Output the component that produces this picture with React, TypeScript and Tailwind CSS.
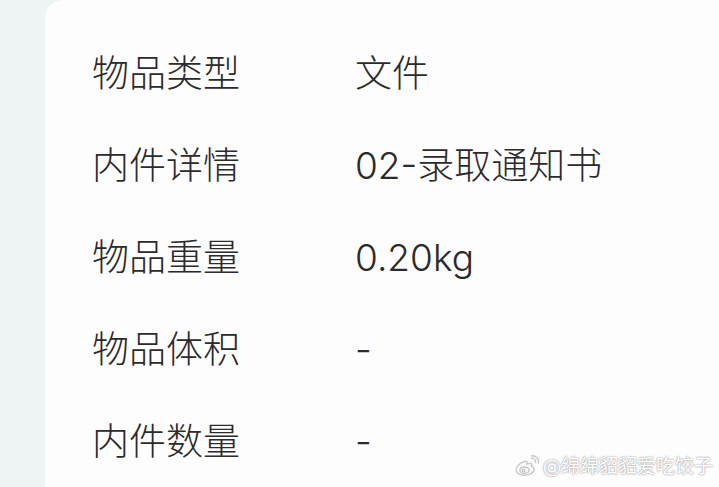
const rows = [
  { label: "物品类型", value: "文件" },
  { label: "内件详情", value: "02-录取通知书" },
  { label: "物品重量", value: "0.20kg" },
  { label: "物品体积", value: "-" },
  { label: "内件数量", value: "-" },
];

const WeiboLogo = () => (
  <svg width="26" height="22" viewBox="0 0 26 22" fill="none">
    <g stroke="#c8c8c8" strokeWidth="1.4" fill="#fafafa">
      <path d="M10.5 6.5c-4.5 1.2-9 5-8.5 8.6.5 3.5 5 5.5 10 5 5-.5 8.6-3.4 8.2-6.3-.3-1.9-2.3-2.3-2.8-2.5.6-1.3.4-2.5-.7-2.8-1.2-.4-3 .3-3.6.6.4-1.4 0-3.5-2.6-2.6z" />
      <ellipse cx="10.5" cy="15.2" rx="4.6" ry="3.2" />
      <circle cx="9.6" cy="15.6" r="1.3" />
    </g>
    <path d="M17 3.2c2.8-.4 5 1.8 4.6 4.5" stroke="#c8c8c8" strokeWidth="1.4" strokeLinecap="round" />
    <path d="M17.5 0.8c4.4-.5 7.7 3 7 7.3" stroke="#c8c8c8" strokeWidth="1.4" strokeLinecap="round" />
  </svg>
);

const App = () => {
  return (
    <div
      className="w-[719px] h-[487px] bg-[#eef3f3] flex overflow-hidden relative"
      style={{ fontFamily: 'Inter, "Noto Sans CJK SC", sans-serif' }}
    >
      <div className="ml-[45px] flex-1 bg-[#fdfdfd] rounded-tl-[18px] pl-[47px] pt-[27px] flex flex-col">
        {rows.map((row) => (
          <div key={row.label} className="h-[92.3px] flex items-center text-[37px] font-light text-[#2b2b2b] leading-none">
            <div className="w-[263px] shrink-0">{row.label}</div>
            <div>{row.value}</div>
          </div>
        ))}
      </div>

      <div className="absolute right-[6px] bottom-[10px] flex items-center gap-[3px]">
        <WeiboLogo />
        <span
          className="text-[19px] text-white leading-none"
          style={{ textShadow: "0 0 2px #9a9a9a, 0 0 1px #aaaaaa" }}
        >
          @绵绵貂貂爱吃饺子
        </span>
      </div>
    </div>
  );
};

export default App;
